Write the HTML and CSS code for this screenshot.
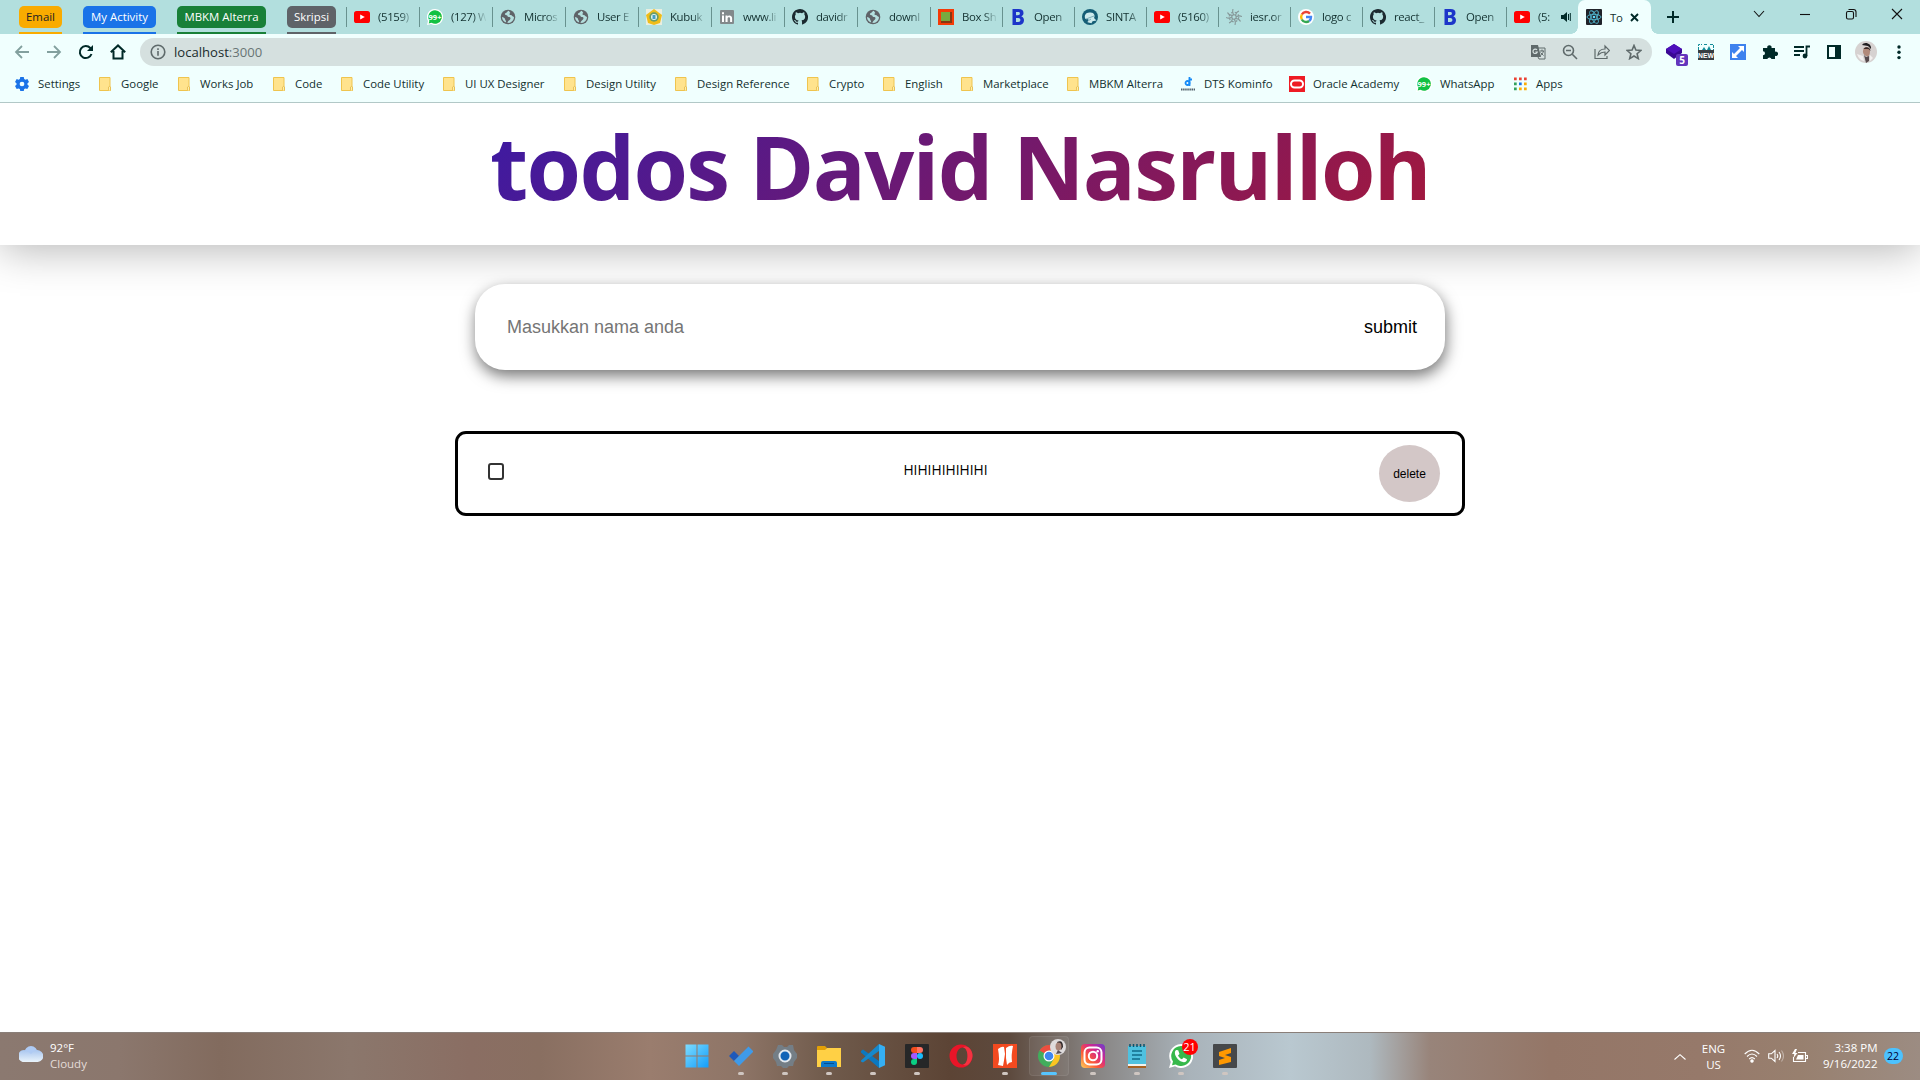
FILE: index.html
```html
<!DOCTYPE html>
<html lang="en">
<head>
<meta charset="utf-8">
<title>Todos</title>
<link rel="stylesheet" href="styles.css">
</head>
<body>
<svg class="sprite" aria-hidden="true">
  <symbol id="youtube" viewBox="0 0 16 16"><rect y="2" width="16" height="12" rx="2.6" fill="#f00"/><path d="M6.2 5.4v5.2L10.8 8z" fill="#fff"/></symbol>
  <symbol id="globe" viewBox="0 0 16 16"><circle cx="8" cy="8" r="7.3" fill="#5f6368"/><path d="M8.8 1.8C7 2.3 7.2 4 5.3 4.2 4.4 5 5 6.2 6.5 6.3c1.3.2.8 1.6 2.2 1.7 1.4 0 2.2.6 1.6 2C9.8 11.300 8 11.500 7.400 13.900l2.600-.1c2.300-.8 4-3.100 4-5.700-1.700-.4-1.700-2-3.400-2.100-1.300 0-1.700-1.500-.3-2.100zM2 8c1.300.6 2.900.6 3 2 .1 1.100 1 1.200 1.200 3.600C3.800 13 2 10.700 2 8z" fill="#b4dfde"/></symbol>
  <symbol id="github" viewBox="0 0 16 16"><path fill="#1b2a30" d="M8 0C3.580 0 0 3.580 0 8c0 3.540 2.290 6.530 5.470 7.590.4.070.55-.17.55-.38v-1.490c-2.010.37-2.530-.49-2.690-.94-.09-.23-.48-.94-.82-1.130-.28-.15-.68-.52-.01-.53.63-.01 1.080.58 1.230.82.72 1.210 1.870.87 2.330.66.070-.52.28-.87.51-1.070-1.780-.2-3.640-.89-3.640-3.950 0-.87.31-1.590.82-2.150-.08-.2-.36-1.020.08-2.120 0 0 .67-.21 2.200.82a7.600 7.600 0 0 1 4 0c1.530-1.040 2.200-.82 2.200-.82.44 1.100.16 1.920.08 2.120.51.56.82 1.270.82 2.150 0 3.070-1.870 3.750-3.650 3.950.29.25.54.73.54 1.480v2.200c0 .21.15.46.55.38A8 8 0 0 0 8 0z"/></symbol>
  <symbol id="bold-b" viewBox="0 0 16 16"><path fill="#1c35c9" fill-rule="evenodd" d="M2.500 0h6c3.500 0 5 1.600 5 4 0 1.700-.8 2.800-2.200 3.400 1.900.5 2.700 2 2.700 3.900 0 3-2 4.700-5.300 4.700H2.500zM6 3v3.300h1.800c1.400 0 2.100-.5 2.100-1.700S9.200 3 7.800 3zm0 6v4h2.200c1.400 0 2.200-.7 2.200-2s-.8-2-2.200-2z"/></symbol>
  <symbol id="folder" viewBox="0 0 12 14"><path d="M.5.500h10.500v9l.5.500v3.500H.5z" fill="#ffe38d" stroke="#efc44e"/><path d="M9.500 13.500V10q1.500-1.500 2 0v3.500" fill="#fff0a8" stroke="#e5b94c" stroke-width=".8"/></symbol>
  <symbol id="whatsapp-count" viewBox="0 0 16 16"><path d="M8 0a8 8 0 1 1-3.800 15L0 16l1-4A8 8 0 0 1 8 0z" fill="#fff"/><path d="M8 1.200a6.800 6.800 0 1 1-3.500 12.600l-2.800.6.700-2.700A6.800 6.800 0 0 1 8 1.200z" fill="#12c143"/><text x="8" y="11" text-anchor="middle" font-family="Open Sans, sans-serif" font-size="7.500" font-weight="700" fill="#fff">99+</text></symbol>
</svg>

<header class="tabstrip">
  <div class="groups">
    <span class="group email">Email</span><span class="group activity">My Activity</span><span class="group mbkm">MBKM Alterra</span><span class="group skripsi">Skripsi</span>
  </div>
  <div class="tabs">
    <div class="tab"><svg><use href="#youtube"/></svg><span>(5159)</span></div>
    <div class="tab"><svg><use href="#whatsapp-count"/></svg><span>(127) W</span></div>
    <div class="tab"><svg><use href="#globe"/></svg><span>Micros</span></div>
    <div class="tab"><svg><use href="#globe"/></svg><span>User E</span></div>
    <div class="tab"><svg viewBox="0 0 16 16"><rect width="16" height="16" fill="#e9eee0"/><path d="M8 0l8 6-2 8-6 2-6-2-2-8z" fill="#efbd19"/><circle cx="8" cy="8" r="4.700" fill="#6a9d66"/><circle cx="8" cy="8" r="3" fill="#e5f4ef"/><path d="M6.500 6h3v4h-3z" fill="#459ec2"/></svg><span>Kubuk</span></div>
    <div class="tab"><svg viewBox="0 0 16 16"><rect x="1" y="1" width="14" height="14" rx="1" fill="#82898b"/><path d="M3 6.500h2V13H3zM3 3.200h2v2H3zM6.500 6.500h2v1c1-1.700 4.600-1.600 4.600 1.800V13h-2V9.800c0-2-2.500-1.900-2.500 0V13h-2.100z" fill="#fff"/></svg><span>www.li</span></div>
    <div class="tab"><svg><use href="#github"/></svg><span>davidr</span></div>
    <div class="tab"><svg><use href="#globe"/></svg><span>downl</span></div>
    <div class="tab short"><svg viewBox="0 0 16 16"><path d="M0 0h16v16H0z" fill="#f43b07"/><path d="M3 3h11v11H3z" fill="#863711"/><path d="M3 3h9v9H3z" fill="#77a940"/></svg><span>Box Sh</span></div>
    <div class="tab short"><svg><use href="#bold-b"/></svg><span>Open</span></div>
    <div class="tab short"><svg viewBox="0 0 16 16"><circle cx="8" cy="8" r="8" fill="#155d75"/><path d="M3.500 10C1.500 6 4.500 3 8 3.500c4-.5 5.500 3 4 5.500l2.500 2.500-4 .8-1 2-4-1 1-3z" fill="#cdeaec"/><path d="M4 10l8-3M6 12l3-2" stroke="#7badb8"/></svg><span>SINTA</span></div>
    <div class="tab short"><svg><use href="#youtube"/></svg><span>(5160)</span></div>
    <div class="tab short"><svg viewBox="0 0 16 16" fill="none" stroke="#869899" stroke-width="1.100"><path d="M8 6Q6 4 7 0M9.500 6.500Q10 3 13 2M10 8q3-2 6-.5M9.500 9.500q3.500 0 5 3M8 10q2 2 1 6M6.500 9.500Q6 13 3 14M6 8Q3 10 0 8.500M6.500 6.500Q3 6.500 1.500 3.500"/><circle cx="8" cy="8" r="2.200"/><circle cx="8" cy="8" r="4.800" stroke-dasharray="2 1.800"/></svg><span>iesr.or</span></div>
    <div class="tab short"><svg viewBox="0 0 16 16" fill="none" stroke-width="2.400"><circle cx="8" cy="8" r="8" fill="#fff"/><path d="M12 4.600A5.100 5.100 0 0 0 3.800 5.500" stroke="#ea4335"/><path d="M3.800 5.500a5 5 0 0 0 0 5" stroke="#fbbc05"/><path d="M3.800 10.500a5 5 0 0 0 7.400 1.500" stroke="#34a853"/><path d="M8 8h5a5 5 0 0 1-1.800 4" stroke="#4285f4"/></svg><span>logo c</span></div>
    <div class="tab short"><svg><use href="#github"/></svg><span>react_</span></div>
    <div class="tab short"><svg><use href="#bold-b"/></svg><span>Open</span></div>
    <div class="tab short audio"><svg><use href="#youtube"/></svg><span>(5:</span><svg class="speaker" viewBox="0 0 10 10"><path d="M0 3h2.500L6 0v10L2.500 7H0z" fill="#002a28"/><path d="M7.500 2v6M9.300 1v8" stroke="#002a28" fill="none"/></svg></div>
  </div>
  <div class="tab-active">
    <svg class="react" viewBox="0 0 16 16"><rect width="16" height="16" rx="1" fill="#20232a"/><g fill="none" stroke="#51b8d0" stroke-width=".9"><ellipse cx="8" cy="8" rx="7" ry="2.700"/><ellipse cx="8" cy="8" rx="7" ry="2.700" transform="rotate(60 8 8)"/><ellipse cx="8" cy="8" rx="7" ry="2.700" transform="rotate(120 8 8)"/></g><circle cx="8" cy="8" r="1.300" fill="#61dafb"/></svg>
    <span>To</span>
    <svg class="close-tab" viewBox="0 0 9 9"><path d="M1 1l7 7M8 1L1 8" stroke="#002a28" stroke-width="1.900"/></svg>
  </div>
  <svg class="new-tab" viewBox="0 0 12 12"><path d="M6 0v12M0 6h12" stroke="#002a28" stroke-width="2"/></svg>
  <div class="window-buttons">
    <svg viewBox="0 0 12 12"><path d="M1 3l5 5.500L11 3" /></svg>
    <svg viewBox="0 0 12 12"><path d="M1 6.500h10"/></svg>
    <svg viewBox="0 0 12 12"><rect x="1.500" y="3.500" width="7" height="7.500" rx="1.500"/><path d="M3.500 1.500h5q2.500 0 2.500 2.500v5"/></svg>
    <svg viewBox="0 0 12 12"><path d="M1 1l10 10M11 1L1 11"/></svg>
  </div>
</header>

<div class="toolbar">
  <div class="nav">
    <svg viewBox="0 0 16 16" class="dim"><path d="M15 8H2M8 2L2 8l6 6"/></svg>
    <svg viewBox="0 0 16 16" class="dim"><path d="M1 8h13M8 2l6 6-6 6"/></svg>
    <svg viewBox="0 0 16 16"><path d="M13.500 10A6 6 0 1 1 12.300 4L14 6"/><path d="M15 1v6H9z" fill="#002a28" stroke="none"/></svg>
    <svg viewBox="0 0 16 16"><path d="M.8 8.200L8 1.400l7.200 6.800M3.500 7v7.500h9V7"/></svg>
  </div>
  <div class="omnibox">
    <svg viewBox="0 0 16 16" class="info"><circle cx="8" cy="8" r="6.800"/><path d="M8 7v4.700M8 4.200v1.700"/></svg>
    <span class="url">localhost<i>:3000</i></span>
    <div class="omni-icons">
      <svg viewBox="0 0 16 16"><path d="M1 1h7l3 12H1z" fill="#5f6a6b" stroke="none"/><path d="M7 4h8v11H9l-1-2M10 7h4M12 5.500V7m1.500 0c-.5 2-1.500 3.500-3 4.500m0-3l3 3" stroke-width="1"/><path d="M7 6a2.200 2.200 0 1 0 .3 2H5.300" stroke="#d5e0df" stroke-width="1.200"/></svg>
      <svg viewBox="0 0 16 16"><circle cx="6.500" cy="6.500" r="5"/><path d="M10.300 10.300L15 15M4 6.500h5"/></svg>
      <svg viewBox="0 0 16 16"><path d="M1 5v9.500h12V12M4 11c.4-4 3-6 7-6V2l4.500 4.500L11 11V8C8 8 6 9 4 11z" stroke-width="1.200"/></svg>
      <svg viewBox="0 0 16 16"><path d="M8 1.500l1.900 4.600 5 .4-3.800 3.200 1.200 4.900L8 12l-4.300 2.600 1.200-4.900L1.100 6.500l5-.4z"/></svg>
    </div>
  </div>
  <div class="extensions">
    <span class="ext purple"><svg viewBox="0 0 16 16"><path d="M8 0l8 5v4l-8 6-8-6V5z" fill="#3a0894"/><path d="M8 0l8 5-8 5-8-5z" fill="#4d10bb"/></svg><b>5</b></span>
    <span class="ext"><svg viewBox="0 0 16 16"><path d="M.5 6V.5H4m2 0h4m2 0h3.500V6" fill="none" stroke="#128b98" stroke-dasharray="3 1"/><path d="M4 6l2-3 2 3zm5 0l2-4 2 4z" fill="#128b98"/><path d="M0 6h16v10H0z" fill="#383d42"/><text x="8" y="13.500" text-anchor="middle" font-family="Liberation Sans, sans-serif" font-size="6.800" font-weight="700" fill="#fff">NEW</text></svg></span>
    <span class="ext"><svg viewBox="0 0 16 16"><path d="M0 0h16v16H0z" fill="#3e82ee"/><path d="M8 2h6v6l-2-2-6 6 2 2H2V8l2 2 6-6z" fill="#fff"/></svg></span>
    <span class="ext"><svg viewBox="0 0 16 16"><path d="M1 4h4.300a2.200 2.200 0 1 1 4.200 0H13v3.800a2.200 2.200 0 1 1 0 4V15H9.500a2.200 2.200 0 0 0-4.200 0H1v-3.800a2 2 0 0 0 0-4z" fill="#002a28"/></svg></span>
    <span class="ext"><svg viewBox="0 0 16 16" fill="none" stroke="#002a28" stroke-width="1.800"><path d="M0 3h10M0 7h10M0 11h6M12.500 12V2.500H16"/><circle cx="11" cy="12" r="1.500" fill="#002a28"/></svg></span>
    <span class="ext"><svg viewBox="0 0 16 16"><path d="M1 1h14v14H1zm2 2v10h6V3z" fill="#002a28" fill-rule="evenodd"/></svg></span>
    <span class="ext avatar"><svg viewBox="0 0 22 22"><circle cx="11" cy="11" r="11" fill="#d6d2d1"/><path d="M7 4c2-4 10-2 9 4l-3-3z" fill="#201e20"/><path d="M9 7c2-2 6-1 6 3s-1 6-4 5-4-5-2-8z" fill="#b18a7a"/><path d="M8.500 8c2-3 7-2 7 2l-2-2H9z" fill="#3a2b29"/><path d="M9 14l2 2 3-1v5l-3 2z" fill="#55494b"/><path d="M2 13q2 6 7 7l-1-5z" fill="#f2f0ef"/><path d="M15 14l3 3-3 3z" fill="#f2f0ef"/></svg></span>
    <span class="ext dots"><svg viewBox="0 0 4 16" fill="#002a28"><circle cx="2" cy="3" r="1.700"/><circle cx="2" cy="8.300" r="1.700"/><circle cx="2" cy="13.600" r="1.700"/></svg></span>
  </div>
</div>

<nav class="bookmarks">
  <a class="bm b-settings"><svg viewBox="0 0 16 16"><path fill="#1a73e8" fill-rule="evenodd" d="M6 0h4l.5 2.300 1.500.9 2.200-.8 1.800 3.300L14.300 7.200v1.700l1.700 1.500-1.900 3.300-2.200-.7-1.400.8L10 16H6l-.5-2.200-1.500-.8-2.100.7L0 10.400l1.700-1.500V7.200L0 5.700l1.900-3.300 2.200.8 1.400-.9zM8 5.300a2.700 2.700 0 1 0 0 5.400 2.700 2.700 0 0 0 0-5.400z"/></svg>Settings</a>
  <a class="bm b-google"><svg><use href="#folder"/></svg>Google</a>
  <a class="bm b-works"><svg><use href="#folder"/></svg>Works Job</a>
  <a class="bm b-code"><svg><use href="#folder"/></svg>Code</a>
  <a class="bm b-codeutil"><svg><use href="#folder"/></svg>Code Utility</a>
  <a class="bm b-uiux"><svg><use href="#folder"/></svg>UI UX Designer</a>
  <a class="bm b-designutil"><svg><use href="#folder"/></svg>Design Utility</a>
  <a class="bm b-designref"><svg><use href="#folder"/></svg>Design Reference</a>
  <a class="bm b-crypto"><svg><use href="#folder"/></svg>Crypto</a>
  <a class="bm b-english"><svg><use href="#folder"/></svg>English</a>
  <a class="bm b-market"><svg><use href="#folder"/></svg>Marketplace</a>
  <a class="bm b-mbkm"><svg><use href="#folder"/></svg>MBKM Alterra</a>
  <a class="bm wide b-dts"><svg viewBox="0 0 16 16"><circle cx="7.500" cy="7" r="2" fill="none" stroke="#168af7" stroke-width="1.800"/><path d="M9.500 1v9M8.500 3.500H12" stroke="#168af7" stroke-width="1.800"/><path d="M1 13.500h14" stroke="#52616b" stroke-width="1.800" stroke-dasharray="1.500 .6"/></svg>DTS Kominfo</a>
  <a class="bm wide b-oracle"><svg viewBox="0 0 16 16"><path d="M0 0h16v16H0z" fill="#ee1b24"/><rect x="2" y="4.500" width="12" height="7" rx="3.500" fill="none" stroke="#fff" stroke-width="2"/></svg>Oracle Academy</a>
  <a class="bm wide b-whatsapp"><svg><use href="#whatsapp-count"/></svg>WhatsApp</a>
  <a class="bm wide b-apps"><svg viewBox="0 0 16 16"><path d="M2 1.500h2.700v2.700H2zM7 1.500h2.700v2.700H7zM12 1.500h2.700v2.700H12z" fill="#ea4335"/><path d="M2 6.500h2.700v2.700H2zM2 11.500h2.700v2.700H2z" fill="#34a05b"/><path d="M7 6.500h2.700v2.700H7z" fill="#1a73e8"/><path d="M12 6.500h2.700v2.700H12zM7 11.500h2.700v2.700H7zM12 11.500h2.700v2.700H12z" fill="#fbab05"/></svg>Apps</a>
</nav>

<main>
  <section class="title-bar"><h1>todos David Nasrulloh</h1></section>
  <form class="entry">
    <input type="text" placeholder="Masukkan nama anda">
    <button type="button">submit</button>
  </form>
  <section class="todo">
    <span class="check"></span>
    <p>HIHIHIHIHIHI</p>
    <button type="button">delete</button>
  </section>
</main>

<footer class="taskbar">
  <div class="weather">
    <svg viewBox="0 0 24 16"><defs><linearGradient id="cl" x2="0" y2="1"><stop stop-color="#a9c6ef"/><stop offset="1" stop-color="#eaf4fb"/></linearGradient></defs><circle cx="12" cy="6.500" r="6.500" fill="#afcbf4"/><path d="M6 16a6 6 0 1 1 3-10.500l3 2.500 3-3A6 6 0 1 1 18 16z" fill="url(#cl)"/></svg>
    <div>92°F<br><span>Cloudy</span></div>
  </div>
  <div class="apps">
    <div class="app idle"><svg viewBox="0 0 24 24"><defs><linearGradient id="wn" x2="1" y2="1"><stop stop-color="#7ddcff"/><stop offset="1" stop-color="#139dfa"/></linearGradient></defs><path d="M.5.500h11v11H.5zM12.500.500h11v11h-11zM.5 12.500h11v11H.5zM12.500 12.500h11v11h-11z" fill="url(#wn)"/></svg></div>
    <div class="app"><svg viewBox="0 0 24 24"><path d="M0 12l5-5 5 5-5 5z" fill="#1e59b9"/><path d="M5 17L19.500 2.500l5 5L10 22z" fill="#3f9ae8"/></svg></div>
    <div class="app"><svg viewBox="0 0 24 24"><path d="M5 1h4l2 2h3l2-2h4l1 5 3 4v4l-3 4-1 4h-4l-2 2h-4l-2-2H4l-1-4-3-4v-4l3-4z" fill="#747e86"/><circle cx="12" cy="12" r="5.500" fill="#1264b7" stroke="#e3e9ef" stroke-width="2"/></svg></div>
    <div class="app"><svg viewBox="0 0 24 24"><path d="M0 3q0-1 1-1h7l2 2-2 3H0z" fill="#e3a006"/><path d="M0 6h8l2-2h14v19H0z" fill="#ffd045"/><path d="M4 23v-4q0-2 2-2h12q2 0 2 2v4z" fill="#0c79cb"/><path d="M7 19.500h10" stroke="#044d91"/></svg></div>
    <div class="app"><svg viewBox="0 0 24 24"><path d="M0 7l2-1.500L18 17v7L0 8.500z" fill="#0c78bf"/><path d="M0 16.500L18 0v7L2 18.500l-2-1z" fill="#1688cb"/><path d="M18 0l6 2.700v18.600L18 24z" fill="#35aff3"/></svg></div>
    <div class="app"><svg viewBox="0 0 24 24"><rect width="24" height="24" rx="1" fill="#262728"/><path d="M12 3v6H9a3 3 0 0 1 0-6z" fill="#f24e1e"/><path d="M12 3h3a3 3 0 0 1 0 6h-3z" fill="#ff7262"/><path d="M12 9v6H9a3 3 0 0 1 0-6z" fill="#a259ff"/><circle cx="15" cy="12" r="3" fill="#1abcfe"/><path d="M12 15v3a3 3 0 1 1-3-3z" fill="#0acf83"/></svg></div>
    <div class="app idle"><svg viewBox="0 0 24 24"><path fill="#e91528" fill-rule="evenodd" d="M12 .5a11.500 11.500 0 1 0 0 23 11.500 11.500 0 0 0 0-23zm1.500 3c3.300 0 5 4 5 8.500s-1.700 8.500-5 8.500-6-4-6-8.500 2.700-8.500 6-8.500z"/><path d="M14 3.500C18 0 24 6 23.500 12S18 24 14 20.500c6 0 6-17 0-17z" fill="#ff4a55" opacity=".55"/></svg></div>
    <div class="app"><svg viewBox="0 0 24 24"><path d="M0 0h24v24H0z" fill="#f24a20"/><path d="M5 5q4-3 6-2l1 7q-1 7-2 12l-5-1q2-5 0-16zM13 4q4-3 7-2-2 9-1 16-3 0-5 3l-1-7z" fill="#fff"/></svg></div>
    <div class="app current"><svg viewBox="0 0 24 24"><circle cx="12" cy="12" r="11" fill="#36a852"/><path d="M12 12L2.500 6.500A11 11 0 0 1 21.500 6.500H12z" fill="#ea4335"/><path d="M12 6.500h9.500A11 11 0 0 1 12 23l4.800-8.300z" fill="#fbc116"/><circle cx="12" cy="12" r="5.500" fill="#fff"/><circle cx="12" cy="12" r="4.300" fill="#3280ed"/></svg><svg class="profile" viewBox="0 0 16 16"><circle cx="8" cy="8" r="8" fill="#dedbdc"/><path d="M7 3q6-3 6 5l-2 3z" fill="#30282a"/><ellipse cx="8.500" cy="7.500" rx="3" ry="4" fill="#a98478"/><path d="M6 15l2-4 4 3z" fill="#575159"/></svg></div>
    <div class="app"><svg viewBox="0 0 24 24"><defs><linearGradient id="ig" x1="0" y1="1" x2="1" y2="0"><stop stop-color="#ffd05b"/><stop offset=".35" stop-color="#fc5b35"/><stop offset=".65" stop-color="#d5278a"/><stop offset="1" stop-color="#693bd0"/></linearGradient></defs><rect width="24" height="24" rx="4" fill="url(#ig)"/><g fill="none" stroke="#fff" stroke-width="2"><rect x="3.500" y="3.500" width="17" height="17" rx="5"/><circle cx="12" cy="12" r="4.200"/></g><circle cx="16.700" cy="7.300" r="1.200" fill="#fff"/></svg></div>
    <div class="app"><svg viewBox="0 0 24 24"><path d="M3 2h18v20H3z" fill="#4fc1df"/><path d="M3 20h18v2H3z" fill="#f2f2ed"/><path d="M3 22h18v2H3z" fill="#a86120"/><path d="M5 0v3m3.500-3v3M12 0v3m3.500-3v3M19 0v3" stroke="#0b536e" stroke-width="1.500"/><path d="M7 7h10M7 11h10M7 15h8" stroke="#126c8b" stroke-width="1.500"/></svg></div>
    <div class="app"><svg viewBox="0 0 24 24"><path d="M12 0a12 12 0 1 1-6 22.300L0 24l1.800-6A12 12 0 0 1 12 0z" fill="#fff"/><path d="M12 2a10 10 0 1 1-5.300 18.400L3 21.300l1-3.700A10 10 0 0 1 12 2z" fill="#36b84b"/><path d="M7 6l2.200.2L10.500 10 9 11.500c1 2 2 3 4 3.800l1.600-1.700 3.400 1.700c0 3-3 3.300-5 2.500C9 16.500 5 11 6 7.500z" fill="#fff"/></svg><b class="count">21</b></div>
    <div class="app"><svg viewBox="0 0 24 24"><rect width="24" height="24" rx="1" fill="#46484a"/><path d="M6 8l12-4v5l-6 2 6 2v5L6 21v-5l6-2-6-2z" fill="#ff9800"/></svg></div>
  </div>
  <div class="tray">
    <svg class="chev" viewBox="0 0 12 6"><path d="M.5 5.500L6 .7l5.500 4.800"/></svg>
    <div class="lang">ENG<br>US</div>
    <svg viewBox="0 0 16 14"><path d="M.7 5Q8-2.500 15.300 5M3 7.500q5-5 10 0M5.200 10q2.800-2.800 5.600 0"/><circle cx="8" cy="12" r="1.200" fill="#fff"/></svg>
    <svg viewBox="0 0 16 14"><path d="M.7 4.800h2.600L7 1.500v11L3.300 9.200H.7zM9 5q1.500 2 0 4M11 3q3 4 0 8"/><path d="M13.500 1.500q4 5.500 0 11" opacity=".4"/></svg>
    <svg viewBox="0 0 16 14"><path d="M6 3.500h7.500v9H1.500V8M14 6.500h1.500v3H14"/><path d="M4 10.500l2-4.500h5.500v4.500z" fill="#fff" stroke="none"/><path d="M3 0L0 5h2.300L1.500 9l4-5H3.300L5 0z" fill="#fff" stroke="none"/></svg>
    <div class="clock">3:38 PM<br>9/16/2022</div>
    <b class="notify">22</b>
  </div>
</footer>
</body>
</html>
```

FILE: styles.css
```css
* { box-sizing: border-box; }
body {
  margin: 0;
  width: 1920px;
  height: 1080px;
  overflow: hidden;
  display: flex;
  flex-direction: column;
  background: #fff;
  font-family: "Open Sans", "Noto Sans", sans-serif;
  font-size: 11.4px;
  color: #12302f;
}
svg { display: block; flex: none; }
.sprite { position: absolute; width: 0; height: 0; }
button, input { border: 0; background: none; padding: 0; font-family: "Liberation Sans", Arial, sans-serif; }

/* Tab strip */
.tabstrip { height: 34px; flex: none; display: flex; background: #b2dfde; padding-left: 19px; }
.groups { display: flex; gap: 21px; margin-right: 10px; padding-top: 6px; }
.group { position: relative; z-index: 0; height: 28px; line-height: 22px; text-align: center; color: #fff; border-bottom: 2px solid var(--c); white-space: nowrap; }
.group::before { content: ""; position: absolute; z-index: -1; inset: 0 0 4px; border-radius: 5px; background: var(--c); }
.email { width: 43px; --c: #f9ab00; color: #202124; }
.activity { width: 73px; --c: #1a73e8; }
.mbkm { width: 89px; --c: #188038; }
.skripsi { width: 49px; --c: #5f6368; }
.tabs { display: flex; }
.tab { width: 73px; height: 20px; margin-top: 7px; border-left: 1px solid #68928f; padding-left: 7px; display: flex; align-items: center; gap: 8px; }
.tab.short { width: 72px; }
.tab svg { width: 16px; height: 16px; }
.tab span { width: 35px; white-space: nowrap; line-height: 20px; letter-spacing: -.35px; mask-image: linear-gradient(90deg, #000 62%, rgba(0, 0, 0, .1) 98%); }
.tab.audio { gap: 5px; }
.tab.audio span { width: 17px; margin-left: 3px; }
.tab .speaker { width: 10px; height: 10px; margin-left: 1px; }
.tab-active { position: relative; width: 73px; height: 34px; background: #f0fffe; border-radius: 7px 7px 0 0; padding: 0 0 0 8px; display: flex; align-items: center; }
.tab-active::before, .tab-active::after { content: ""; position: absolute; bottom: 0; width: 7px; height: 7px; }
.tab-active::before { left: -7px; background: radial-gradient(circle at 0 0, transparent 6.5px, #f0fffe 7px); }
.tab-active::after { right: -7px; background: radial-gradient(circle at 100% 0, transparent 6.5px, #f0fffe 7px); }
.tab-active span { width: 13px; margin-left: 8px; letter-spacing: -.3px; }
.react { width: 16px; height: 16px; }
.close-tab { width: 9px; height: 9px; margin-left: 7px; }
.new-tab { width: 12px; height: 12px; margin: 11px 0 0 16px; }
.window-buttons { display: flex; gap: 34px; margin: 8px 17px 0 auto; }
.window-buttons svg { width: 12px; height: 12px; fill: none; stroke: #111; stroke-width: 1.1; }

/* Address bar */
.toolbar { height: 36px; flex: none; display: flex; align-items: center; background: #f0fffe; padding-left: 14px; }
.nav { display: flex; gap: 16px; width: 126px; }
.nav svg { width: 16px; height: 16px; fill: none; stroke: #002a28; stroke-width: 2; }
.nav .dim { stroke: #82a09e; stroke-width: 1.8; }
.omnibox { width: 1512px; height: 28px; border-radius: 14px; background: #d5e0df; display: flex; align-items: center; padding: 0 10px; }
.omnibox svg { width: 16px; height: 16px; fill: none; stroke: #5f6a6b; stroke-width: 1.6; }
.url { font-size: 13.1px; margin-left: 8px; color: #202c2c; }
.url i { font-style: normal; color: #687575; }
.omni-icons { display: flex; gap: 16px; margin-left: auto; }
.extensions { display: flex; align-items: center; gap: 16px; margin-left: 14px; }
.ext { position: relative; width: 16px; height: 16px; }
.ext svg { width: 16px; height: 16px; }
.ext b { position: absolute; left: 10px; top: 10px; width: 12px; height: 12px; border-radius: 2px; background: #6335bd; color: #fff; font-size: 10px; line-height: 12px; text-align: center; }
.avatar { width: 22px; height: 22px; margin: 0 -3px; }
.avatar svg { width: 22px; height: 22px; }
.ext.dots svg { width: 4px; margin-left: 7px; }

/* Bookmarks */
.bookmarks { height: 33px; flex: none; display: flex; background: #f0fffe; border-bottom: 1px solid #b2c8c7; padding: 0 0 5px 14px; }
.bm { display: flex; align-items: center; gap: 10px; white-space: nowrap; }
.bm svg { width: 12px; height: 14px; }
.bm.wide svg, .b-settings svg { width: 16px; height: 16px; }
.bm.wide, .b-settings { gap: 8px; }
.b-settings { width: 85px; }
.b-settings svg { height: 14px; }
.b-google { width: 79px; }
.b-works { width: 95px; }
.b-code { width: 68px; }
.b-codeutil { width: 102px; }
.b-uiux { width: 121px; }
.b-designutil { width: 111px; }
.b-designref { width: 132px; }
.b-crypto { width: 76px; }
.b-english { width: 78px; }
.b-market { width: 106px; }
.b-mbkm { width: 113px; }
.b-dts { width: 109px; }
.b-oracle { width: 127px; }
.b-whatsapp { width: 96px; }

/* Todo page */
main { flex: 1; display: flex; flex-direction: column; align-items: center; color: #000; background: #fff; overflow: hidden; }
.title-bar { width: 100%; height: 142px; flex: none; display: flex; justify-content: center; background: #fff; box-shadow: 0 5px 40px rgba(0, 0, 0, .29); }
h1 { margin: 0; font-size: 88px; line-height: 127px; font-weight: 700; letter-spacing: -1.7px; white-space: nowrap; color: transparent; background: linear-gradient(135deg, #3b1aa4, #a5183a); background-clip: text; -webkit-background-clip: text; }
.entry { width: 970px; height: 86px; flex: none; margin: 39px 0 0; padding: 0 28px 0 32px; display: flex; align-items: center; border-radius: 30px; background: #fff; box-shadow: 1px 6px 15px rgba(0, 0, 0, .54); }
.entry input { flex: 1; font-size: 18px; }
.entry input::placeholder { color: #757575; }
.entry button { font-size: 18px; color: #000; }
.todo { width: 1010px; height: 85px; flex: none; margin-top: 61px; border: 3px solid #000; border-radius: 11px; padding: 0 22px 0 30px; display: flex; align-items: center; justify-content: space-between; }
.check { width: 16px; height: 17px; border: 2px solid #333; border-radius: 3px; margin-top: -4px; }
.todo p { margin: 0 0 8px 8px; font-size: 13.8px; }
.todo button { width: 61px; height: 57px; border-radius: 50%; background: #d3c7c7; font-size: 12px; color: #000; }

/* Taskbar */
.taskbar { height: 48px; flex: none; display: grid; grid-template-columns: 674.5px 572px 1fr; color: #fff; font-size: 11.5px; line-height: 16px; border-top: 1px solid #8a7f79;
  background: linear-gradient(90deg, #8b7970 0, #8b776d 120px, #826b5e 220px, #8b776c 350px, #8a6e63 470px, #896f61 540px, #9a7d6e 650px, #8e7567 740px, #6f5a4b 830px, #5c4435 950px, #5d4a3e 1010px, #85817f 1090px, #a9b3ba 1190px, #b9c8d0 1290px, #aeb9bf 1370px, #98847a 1430px, #947667 1550px, #96796a 1700px, #98806f 1800px, #9c8c82 1920px); }
.weather { display: flex; padding: 7px 0 0 19px; gap: 7px; }
.weather svg { width: 24px; height: 16px; margin-top: 6px; }
.weather span { color: #e4dcd8; }
.apps { display: flex; }
.app { position: relative; width: 44px; height: 47px; padding: 11px 10px 0; }
.app svg { width: 24px; height: 24px; }
.app::after { content: ""; display: block; width: 6px; height: 3px; border-radius: 2px; background: #cfc6c1; margin: 4px auto 0; }
.app.idle::after { display: none; }
.app.current::before { content: ""; position: absolute; inset: 3px 2px 4px; border: 1px solid rgba(255, 255, 255, .07); border-radius: 4px; background: rgba(255, 255, 255, .06); }
.app.current::after { width: 16px; background: #4cc2ff; }
.app .profile { position: absolute; left: 23px; top: 6px; width: 16px; height: 16px; }
.count { position: absolute; left: 23px; top: 6px; width: 16px; height: 16px; border-radius: 50%; background: #f00; font: 11px/16px "Open Sans", sans-serif; text-align: center; }
.tray { display: flex; align-items: center; }
.tray svg { width: 16px; height: 14px; fill: none; stroke: #fff; stroke-width: 1.1; margin: -2px 8px 0 0; }
.tray svg.chev { width: 12px; height: 6px; margin: 0 16px 0 427px; }
.lang { width: 24px; text-align: center; margin: 0 18px 0 0; }
.clock { width: 62px; text-align: right; margin: -2px 6px 0 0; }
.notify { width: 19px; height: 16px; margin-top: -2px; border-radius: 8px; background: #4cc2ff; color: #003; font-weight: 400; font-size: 10.5px; text-align: center; }
```
